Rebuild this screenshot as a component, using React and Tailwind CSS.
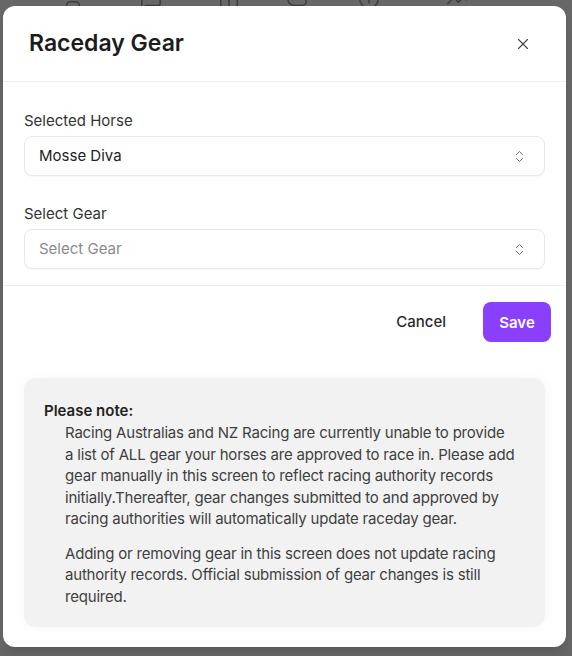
import React from 'react';
import { X, ChevronsUpDown, User, MessageSquare, Columns2, Cloud, CirclePlus, TrendingUp } from 'lucide-react';

const bgIcons = [
  { Icon: User, left: 'left-[62px]' },
  { Icon: MessageSquare, left: 'left-[140px]' },
  { Icon: Columns2, left: 'left-[218px]' },
  { Icon: Cloud, left: 'left-[286px]' },
  { Icon: CirclePlus, left: 'left-[358px]' },
  { Icon: TrendingUp, left: 'left-[446px]' },
];

const SelectBox = ({ value, placeholder }) => (
  <div className="flex h-10 items-center justify-between rounded-lg border border-[#e8e8e8] bg-white pl-[14px] pr-[17px] shadow-[0_1px_1px_rgba(0,0,0,0.03)]">
    <span className={value ? 'text-[15px] text-[#222]' : 'text-[15px] text-[#8a8a8a]'}>
      {value || placeholder}
    </span>
    <ChevronsUpDown size={15} strokeWidth={1.5} className="text-[#666]" />
  </div>
);

export default function App() {
  return (
    <div
      className="relative h-[656px] w-[572px] overflow-hidden bg-[#676767]"
      style={{ fontFamily: 'Inter, "Noto Sans", sans-serif' }}
    >
      {/* page behind the overlay */}
      {bgIcons.map(({ Icon, left }, i) => (
        <Icon key={i} size={22} strokeWidth={1.6} className={`absolute top-[-12px] ${left} text-[#3c3c3c]`} />
      ))}

      <div className="absolute left-[3px] top-[6px] flex h-[641px] w-[563px] flex-col rounded-[12px] bg-white shadow-lg">
        {/* header */}
        <div className="flex h-[76px] items-center justify-between border-b border-[#efefef] pl-[26px] pr-[34px]">
          <h2 className="text-[23px] font-semibold text-[#1c1c1c]">Raceday Gear</h2>
          <X size={18} strokeWidth={1.5} className="text-[#444]" />
        </div>

        {/* body */}
        <div className="flex flex-col border-b border-[#efefef] px-[21px] pb-4 pt-[29px]">
          <label className="mb-[5px] text-[15px] leading-5 text-[#333]">Selected Horse</label>
          <SelectBox value="Mosse Diva" />
          <label className="mb-[5px] mt-[28px] text-[15px] leading-5 text-[#333]">Select Gear</label>
          <SelectBox placeholder="Select Gear" />
        </div>

        {/* footer */}
        <div className="flex items-center justify-end gap-[37px] pr-[15px] pt-4">
          <button className="text-[15px] font-medium text-[#2a2a2a]">Cancel</button>
          <button className="h-10 w-[68px] rounded-lg bg-[#8a3ffc] pt-[2px] text-[15px] font-semibold text-white">Save</button>
        </div>

        {/* note */}
        <div className="mx-[21px] mb-5 mt-9 flex-1 rounded-[12px] bg-[#f2f2f2] px-5 pt-[23px] text-[#3f3f3f] shadow-[0_0_12px_rgba(0,0,0,0.04)]">
          <p className="text-[15px] font-semibold leading-5 text-[#222]">Please note:</p>
          <div className="pl-[21px] pt-[1px] text-[15px] leading-[21.5px] tracking-[-0.2px]">
            <p>
              Racing Australias and NZ Racing are currently unable to provide
              <br />
              a list of ALL gear your horses are approved to race in. Please add gear manually in this screen to
              reflect racing authority records initially.Thereafter, gear changes submitted to and approved by racing
              authorities will automatically update raceday gear.
            </p>
            <p className="mt-[13px]">
              Adding or removing gear in this screen does not update racing authority records. Official submission of
              gear changes is still required.
            </p>
          </div>
        </div>
      </div>
    </div>
  );
}
